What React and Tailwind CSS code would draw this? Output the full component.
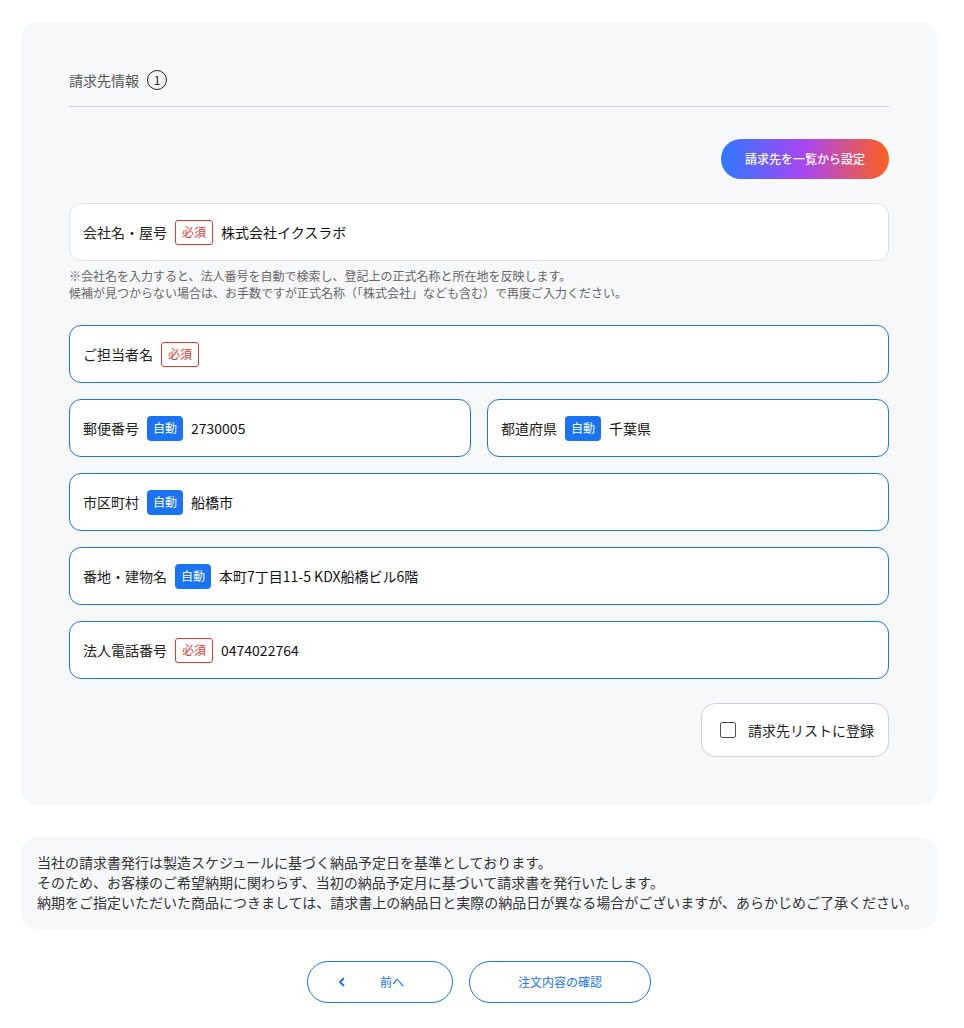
import React from "react";

const FONT = { fontFamily: '"Noto Sans CJK JP", "Noto Sans", sans-serif' };

function Required() {
  return (
    <span className="inline-flex h-[25px] items-center rounded-[3px] border border-[#e53935] px-[6px] text-[12px] leading-none text-[#e53935]">
      必須
    </span>
  );
}

function Auto() {
  return (
    <span className="inline-flex h-[25px] items-center rounded-[4px] bg-[#1a73f2] px-[6px] text-[12px] leading-none text-white">
      自動
    </span>
  );
}

function Field({ label, badge, value, active = true, className = "" }) {
  return (
    <div
      className={`flex h-[58px] items-center gap-2 rounded-[12px] border bg-white px-[13px] ${
        active ? "border-[#1a73f2]" : "border-[#dde0e6]"
      } ${className}`}
    >
      <span className="text-[14px] text-[#222]">{label}</span>
      {badge === "req" ? <Required /> : badge === "auto" ? <Auto /> : null}
      {value ? <span className="text-[14px] text-[#111]">{value}</span> : null}
    </div>
  );
}

export default function App() {
  return (
    <div style={FONT} className="min-h-[1028px] w-[964px] bg-white pl-[21px] pr-[27px] pt-[22px] pb-[25px]">
      <div className="rounded-[16px] bg-[#f7f8fa] px-[48px] pt-[48px] pb-[48px]">
        <div className="flex items-center gap-[8px] border-b border-[#cfd1d8] pb-[16px]">
          <span className="text-[14px] leading-[20px] text-[#555]">請求先情報</span>
          <span className="flex h-[20px] w-[20px] items-center justify-center rounded-full border border-[#222] text-[12px] leading-none text-[#222]">
            1
          </span>
        </div>

        <div className="mt-[32px] flex justify-end">
          <button
            className="h-[40px] w-[168px] rounded-full text-[12px] font-medium text-white"
            style={{
              background:
                "linear-gradient(90deg, #2f78ff 0%, #a946f2 50%, #ff611c 100%)",
            }}
          >
            請求先を一覧から設定
          </button>
        </div>

        <Field
          className="mt-[24px]"
          label="会社名・屋号"
          badge="req"
          value="株式会社イクスラボ"
          active={false}
        />
        <p className="mt-[6px] text-[12px] leading-[17px] text-[#666]">
          ※会社名を入力すると、法人番号を自動で検索し、登記上の正式名称と所在地を反映します。
          <br />
          候補が見つからない場合は、お手数ですが正式名称（「株式会社」なども含む）で再度ご入力ください。
        </p>

        <div className="mt-[24px] flex flex-col gap-[16px]">
          <Field label="ご担当者名" badge="req" />
          <div className="grid grid-cols-2 gap-[16px]">
            <Field label="郵便番号" badge="auto" value="2730005" />
            <Field label="都道府県" badge="auto" value="千葉県" />
          </div>
          <Field label="市区町村" badge="auto" value="船橋市" />
          <Field label="番地・建物名" badge="auto" value="本町7丁目11-5 KDX船橋ビル6階" />
          <Field label="法人電話番号" badge="req" value="0474022764" />
        </div>

        <div className="mt-[24px] flex justify-end">
          <label className="flex h-[54px] w-[188px] items-center gap-[12px] rounded-[14px] border border-[#cfd1d6] bg-white pl-[18px]">
            <span className="h-[16px] w-[16px] rounded-[2px] border border-[#555] bg-white" />
            <span className="text-[14px] text-[#222]">請求先リストに登録</span>
          </label>
        </div>
      </div>

      <div className="mt-[32px] rounded-[16px] bg-[#f7f8fa] px-[16px] pt-[15px] pb-[17px] text-[14px] leading-[20px] text-[#333]">
        <p>当社の請求書発行は製造スケジュールに基づく納品予定日を基準としております。</p>
        <p>そのため、お客様のご希望納期に関わらず、当初の納品予定月に基づいて請求書を発行いたします。</p>
        <p>
          納期をご指定いただいた商品につきましては、請求書上の納品日と実際の納品日が異なる場合がございますが、あらかじめご了承ください。
        </p>
      </div>

      <div className="mt-[32px] flex justify-center gap-[16px]">
        <button className="relative flex h-[42px] w-[146px] items-center justify-center rounded-full border border-[#1a73f2] bg-white pl-[24px] text-[12px] text-[#1a73f2]">
          <svg
            className="absolute left-[30px]"
            width="8"
            height="10"
            viewBox="0 0 8 10"
            fill="none"
            stroke="#1a73f2"
            strokeWidth="1.8"
            strokeLinecap="round"
            strokeLinejoin="round"
          >
            <path d="M5.5 1.5 L2 5 L5.5 8.5" />
          </svg>
          前へ
        </button>
        <button className="flex h-[42px] w-[182px] items-center justify-center rounded-full border border-[#1a73f2] bg-white text-[12px] text-[#1a73f2]">
          注文内容の確認
        </button>
      </div>
    </div>
  );
}
